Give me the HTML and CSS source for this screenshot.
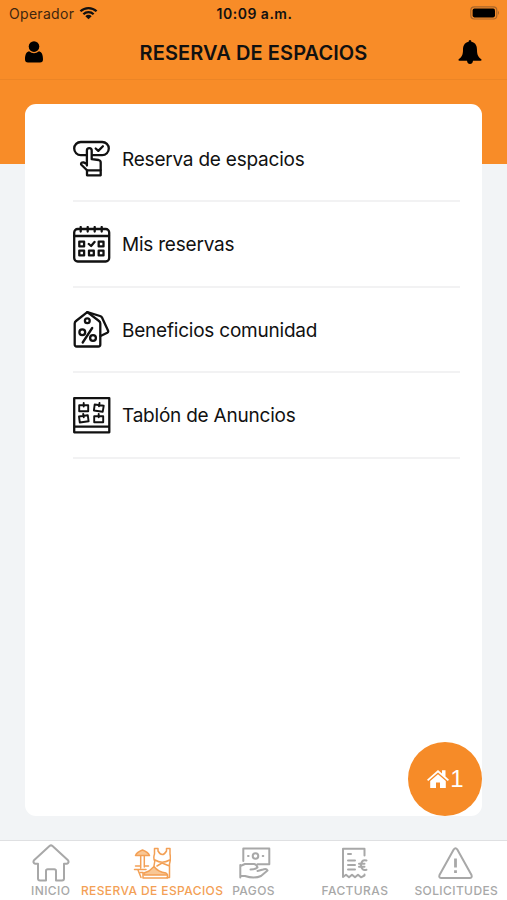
FILE: index.html
```
<!DOCTYPE html>
<html lang="es">

<head>
    <meta charset="UTF-8">
    <meta name="viewport" content="width=device-width, initial-scale=1.0">
    <title>Reserva de espacios</title>
    <link rel="stylesheet" href="styles.css">
</head>

<body>
    <div class="status">
        <div class="carrier">
            <span>Operador</span>
            <svg class="wifi" viewBox="0 0 20 14">
                <path d="M1.5 5.2a12.3 12.3 0 0 1 17 0M4.6 8.3a7.8 7.8 0 0 1 10.8 0" />
                <path class="solid" d="M10 13.6 6.7 10.3a4.7 4.7 0 0 1 6.6 0z" />
            </svg>
        </div>
        <span class="time">10:09 a.m.</span>
        <svg class="battery" viewBox="0 0 30 14">
            <rect class="case" x=".8" y=".8" width="26" height="12.2" rx="3.5" />
            <rect x="2.6" y="2.6" width="22.4" height="8.8" rx="1.8" />
            <path class="tip" d="M28 4.8q2 2 0 4.2z" />
        </svg>
    </div>
    <header>
        <svg class="user" viewBox="0 0 18 22">
            <circle cx="9" cy="5.6" r="5.3" />
            <path d="M4 10.300Q9 14.300 14 10.300C17 11 18 14.500 18 18.200Q18 21.500 15 21.500H3Q0 21.500 0 18.200C0 14.500 1 11 4 10.300z" />
        </svg>
        <h1>RESERVA DE ESPACIOS</h1>
        <svg class="bell" viewBox="0 0 24 24">
            <path d="M12 0q1.400 0 1.400 1.800C18 2.800 19 6.500 19 10c0 5 1.500 7.500 4.300 9.200q.8 1.600-.8 1.600H15Q14.500 24 12 24T9 20.800H1.500Q-.1 20.800.7 19.200C3.500 17.500 5 15 5 10c0-3.500 1-7.200 5.600-8.200Q10.600 0 12 0z" />
        </svg>
    </header>
    <main>
        <div class="card">
            <ul>
                <li>
                    <svg class="icon" viewBox="0 0 38 38">
                        <path d="M13 15.200H7.800a6.600 6.600 0 0 1 0-13.200H29.200a6.600 6.600 0 0 1 0 13.200H20M22.700 8.500l2.600 2.400 4.600-4.700" />
                        <path d="M13.900 25.500V10.500a2.400 2.400 0 0 1 4.800 0V19.200L25.600 20Q27.700 20.500 27.700 22.500V30M13.900 24 10.500 22.400Q7.600 22.200 8.100 24.500L14 30.300" />
                        <path d="M14 30.300H27.700V35.300H14z" />
                    </svg>
                    <span>Reserva de espacios</span>
                </li>
                <li>
                    <svg class="icon" viewBox="0 0 38 38">
                        <rect x="1.200" y="3" width="35" height="32.500" rx="3.500" />
                        <path d="M1.200 10H36M7.700 1V5.500M14.700 1V5.500M21.700 1V5.500M28.700 1V5.500M15.800 18l2.300 2 3.400-4" />
                        <path d="M6.300 15.600h4.800v4.800h-4.800zM25.700 15.600h4.800v4.800h-4.800zM6.300 24.600h4.800v4.800h-4.800zM16 24.600h4.800v4.800h-4.800zM25.700 24.600h4.800v4.800h-4.800z" />
                    </svg>
                    <span>Mis reservas</span>
                </li>
                <li>
                    <svg class="icon" viewBox="0 0 38 38">
                        <path d="M14.300 1.200 26 10Q27.300 11 27.300 12.500V33.500Q27.300 35.500 25.300 35.500H3.700Q1.700 35.500 1.700 33.500V12.500Q1.700 11 3 10z" />
                        <path d="M14.300 1.200 27 5Q28.500 5.500 29 6.500L35 19.500Q35.600 21 34.300 21.700L27.500 25" />
                        <circle cx="14.300" cy="9.700" r="2.400" />
                        <circle cx="9.300" cy="21.300" r="2.900" />
                        <circle cx="20" cy="27" r="2.900" />
                        <path d="M19.200 17 9.700 31.500" />
                    </svg>
                    <span>Beneficios comunidad</span>
                </li>
                <li>
                    <svg class="icon" viewBox="0 0 38 38">
                        <path d="M1.200 1.200H36.300V35.300H1.200zM1.200 29.700H36.300" />
                        <path class="notes" d="M6.200 8.300h9v6h-9zM10.700 6V9.500M21.700 7.500l9 1.300-1 6-8.800-1.300zM26.500 6 26 9.300M6 19.500l8.800-1.200.8 6-8.800 1.200zM10.200 17l.5 3.300M21.200 19.300h9v6h-9zM25.700 17V20.300" />
                    </svg>
                    <span>Tablón de Anuncios</span>
                </li>
            </ul>
            <button class="home-button">
                <svg viewBox="0 0 24 20">
                    <path d="M12 1 16 4.500V1.200H19.500V7.600L23 10.700 21.800 12 12 3.600 2.200 12 1 10.700z" />
                    <path d="M12 5.300 19.800 12V19H14V13.500H10V19H4.200V12z" />
                </svg>
                <span>1</span>
            </button>
        </div>
    </main>
    <nav>
        <a class="tab">
            <svg class="icon" viewBox="0 0 38 38">
                <path d="M17.500 2Q19 .8 20.500 2L36 16.200Q37.500 18.800 34.800 19.700H32V34.500Q32 36.500 30 36.500H24V27Q24 25.300 22.300 25.300H15.700Q14 25.300 14 27V36.500H8Q6 36.500 6 34.500V19.700H3.200Q.5 18.800 2 16.200z" />
            </svg>
            <span>INICIO</span>
        </a>
        <a class="tab active">
            <svg class="icon" viewBox="0 0 38 38">
                <path class="fill" d="M2.500 11.500Q4 8 9.500 6Q15 8 16.500 11.500z" />
                <path d="M7.700 12V24M11.300 12V23M2.500 22H7M12 22H15.500M1.500 25.500H13M5 26 8 33.500M7.500 28.500H10" />
                <path d="M21.500 4.500V10Q20 14 21.800 17L21 22M25 4.500V7Q29.300 14 33.500 7V4.500M37 4.500V10Q38 15 36.500 20V33.500H34M21.500 4.500H25M33.500 4.500H37M22 16Q29 20.500 36.700 16M24 22 29 19 36.500 22" />
                <path class="fill" d="M11 29 16 27 21 22.500Q25 28 33 29Q34.500 30 34.500 31H11z" />
                <path d="M10 29V34H34.500V31" />
            </svg>
            <span>RESERVA DE ESPACIOS</span>
        </a>
        <a class="tab">
            <svg class="icon" viewBox="0 0 38 38">
                <path d="M8.300 17V4.500H34.300V20.300H22.500" />
                <circle cx="20.500" cy="12" r="2.800" />
                <path d="M13 12h.6M27.700 12h.6" />
                <path d="M5.300 21V33.500M5.300 22 10 20H19Q22 20.500 22.500 23.500Q20 25.500 15.500 25.500M5.300 32H10Q19 35 26 32L32.500 26.500Q31.500 24.300 28 25.500L22.500 27" />
            </svg>
            <span>PAGOS</span>
        </a>
        <a class="tab">
            <svg class="icon" viewBox="0 0 38 38">
                <path d="M28.500 11.500V4.700H7V33L10 30.700 13 33.300 16 30.700 19 33.300 22 30.700 25 33.300 28.500 31.500V30.500M12 10H15M12 16.500H19M12 21H19M12 25.500H19" />
                <path d="M30.500 16.500Q25.500 15 25 21Q25.500 27.300 30.500 25.700M23 19.700H28.500M23 22.700H28.500" />
            </svg>
            <span>FACTURAS</span>
        </a>
        <a class="tab">
            <svg class="icon" viewBox="0 0 38 38">
                <path d="M16.700 5.500Q18.500 3 20.300 5.500L34.500 31Q35.500 34 32.500 34H4.500Q1.500 34 2.500 31z" />
                <path class="mark" d="M18.500 14.500V23.500M18.500 26.300V29" />
            </svg>
            <span>SOLICITUDES</span>
        </a>
    </nav>
</body>

</html>
```
FILE: styles.css
```
* {
    box-sizing: border-box;
}

body {
    margin: 0;
    height: 900px;
    display: flex;
    flex-direction: column;
    overflow: hidden;
    background-color: #f2f4f6;
    color: #111;
    font-family: Inter, "Liberation Sans", sans-serif;
}

.status {
    height: 27px;
    padding: 0 7px 0 9px;
    display: grid;
    grid-template-columns: 1fr auto 1fr;
    align-items: center;
    background-color: #f88c28;
    font-size: 14px;
}

.carrier {
    display: flex;
    align-items: center;
    gap: 5px;
    color: #40260e;
    letter-spacing: 0.3px;
}

.wifi {
    width: 19px;
    height: 14px;
    margin-top: -2px;
    fill: none;
    stroke: #111;
    stroke-width: 2.4;
}

.wifi .solid {
    fill: #111;
    stroke: none;
}

.time {
    font-weight: 600;
    letter-spacing: 0.5px;
}

.battery {
    width: 30px;
    height: 14px;
    margin-top: -1px;
    justify-self: end;
}

.battery .case {
    fill: none;
    stroke: #a9662a;
    stroke-width: 1.2;
}

.battery .tip {
    fill: #a9662a;
}

header {
    height: 53px;
    padding: 0 25px;
    display: flex;
    align-items: center;
    justify-content: space-between;
    background-color: #f88c28;
    border-bottom: 1px solid #ec8526;
}

h1 {
    margin: 0 0 0 6px;
    font-size: 20px;
    font-weight: 600;
    letter-spacing: 0.1px;
}

.user {
    width: 18px;
    height: 22px;
    margin-top: -2px;
}

.bell {
    width: 24px;
    height: 24px;
    margin-top: -2px;
}

main {
    flex: 1;
    padding: 23.5px 25px 24px;
    background: linear-gradient(#f88c28 84px, #f2f4f6 84px);
}

.card {
    height: 100%;
    display: flex;
    flex-direction: column;
    justify-content: space-between;
    background-color: #fff;
    border-radius: 11px;
}

ul {
    margin: 0;
    padding: 13px 22px 0 48px;
    list-style: none;
}

li {
    height: 85.5px;
    padding-top: 2px;
    display: flex;
    align-items: center;
    gap: 11px;
    border-bottom: 2px solid #f2f2f3;
    font-size: 19px;
    letter-spacing: -0.22px;
}

.icon {
    width: 38px;
    height: 38px;
    fill: none;
    stroke: currentColor;
    stroke-width: 2.3;
    stroke-linecap: round;
    stroke-linejoin: round;
}

.icon .notes {
    stroke-width: 1.9;
}

.home-button {
    width: 74px;
    height: 74px;
    align-self: flex-end;
    padding: 0;
    display: flex;
    align-items: center;
    justify-content: center;
    border: 0;
    border-radius: 50%;
    background-color: #f68b28;
    color: #fff;
    font-family: "Liberation Sans", sans-serif;
    font-size: 24px;
}

.home-button svg {
    width: 24px;
    height: 20px;
    fill: #fff;
}

nav {
    height: 60px;
    display: flex;
    background-color: #fff;
    border-top: 1px solid #dfe0e2;
}

.tab {
    flex: 1 1 0;
    min-width: 0;
    padding-top: 3px;
    display: flex;
    flex-direction: column;
    align-items: center;
    color: #a8a8a8;
    font-size: 12px;
    font-weight: 500;
    line-height: 18px;
    letter-spacing: 0.4px;
    white-space: nowrap;
}

.tab .icon {
    stroke-width: 2;
}

.tab.active {
    color: #f3a055;
}

.tab.active .icon {
    stroke-width: 1.5;
}

.tab.active .fill {
    fill: #f9c795;
}

.tab .mark {
    stroke-width: 2.8;
    stroke-linecap: butt;
}
```
